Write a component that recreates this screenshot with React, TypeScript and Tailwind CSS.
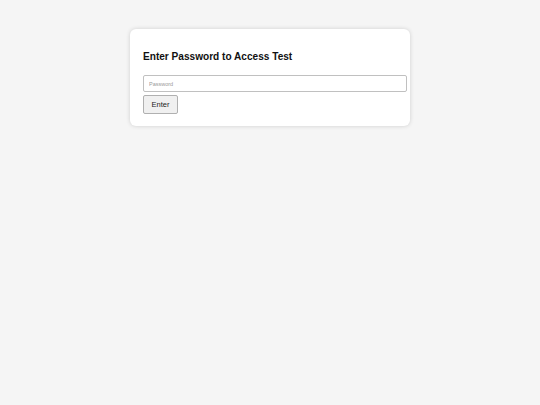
import React from "react";

export default function App() {
  return (
    <div
      className="min-h-screen w-full bg-[#f5f5f5] flex justify-center pt-[29px]"
      style={{ fontFamily: '"Liberation Sans", Arial, sans-serif' }}
    >
      <div className="w-[280px] h-[97px] bg-white rounded-[6px] shadow-[0_0_4px_rgba(0,0,0,0.16)] pl-[13px] pt-[22px] flex flex-col">
        <h2 className="text-[10.1px] leading-[12px] font-bold text-[#111] m-0">
          Enter Password to Access Test
        </h2>
        <input
          type="password"
          placeholder="Password"
          className="mt-[12px] w-[264px] h-[17px] border border-[#c0c0c0] rounded-[2px] px-[5px] text-[5.5px] placeholder:text-[#9a9a9a] outline-none bg-white"
        />
        <button className="mt-[3px] w-[35px] h-[19px] border border-[#b0b0b0] bg-[#f0f0f0] rounded-[2px] text-[7.5px] text-[#222] flex items-center justify-center">
          Enter
        </button>
      </div>
    </div>
  );
}
